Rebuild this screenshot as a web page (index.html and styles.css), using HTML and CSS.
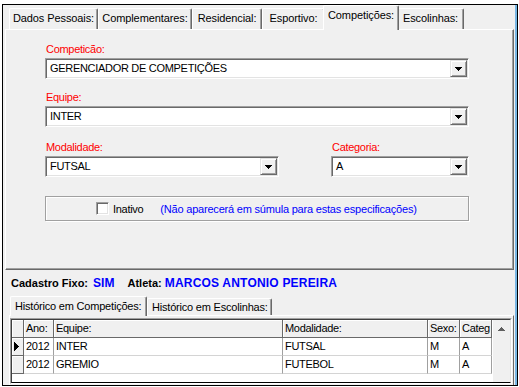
FILE: index.html
```html
<!DOCTYPE html>
<html lang="pt-BR">
<head>
  <meta charset="UTF-8" />
  <title>Competições</title>
  <link rel="stylesheet" href="styles.css">
</head>
<body>
  <div class="window">
    <div class="tabs">
      <div class="tab t-dados">Dados Pessoais:</div>
      <div class="tab t-compl">Complementares:</div>
      <div class="tab t-resid">Residencial:</div>
      <div class="tab t-esport">Esportivo:</div>
      <div class="tab t-compet active">Competições:</div>
      <div class="tab t-escol">Escolinhas:</div>
    </div>

    <div class="panel">
      <div class="field">
        <div class="lbl">Competicão:</div>
        <div class="combo">
          <span class="value">GERENCIADOR DE COMPETIÇÕES</span>
          <span class="drop"><svg width="7" height="4" viewBox="0 0 7 4"><path d="M0 0h7v1H0zM1 1h5v1H1zM2 2h3v1H2zM3 3h1v1H3z"/></svg></span>
        </div>
      </div>

      <div class="field second">
        <div class="lbl">Equipe:</div>
        <div class="combo">
          <span class="value">INTER</span>
          <span class="drop"><svg width="7" height="4" viewBox="0 0 7 4"><path d="M0 0h7v1H0zM1 1h5v1H1zM2 2h3v1H2zM3 3h1v1H3z"/></svg></span>
        </div>
      </div>

      <div class="row">
        <div class="field modal">
          <div class="lbl">Modalidade:</div>
          <div class="combo">
            <span class="value">FUTSAL</span>
            <span class="drop"><svg width="7" height="4" viewBox="0 0 7 4"><path d="M0 0h7v1H0zM1 1h5v1H1zM2 2h3v1H2zM3 3h1v1H3z"/></svg></span>
          </div>
        </div>
        <div class="field categ">
          <div class="lbl">Categoria:</div>
          <div class="combo">
            <span class="value">A</span>
            <span class="drop"><svg width="7" height="4" viewBox="0 0 7 4"><path d="M0 0h7v1H0zM1 1h5v1H1zM2 2h3v1H2zM3 3h1v1H3z"/></svg></span>
          </div>
        </div>
      </div>

      <div class="group">
        <span class="check"></span>
        <span>Inativo</span>
        <span class="note">(Não aparecerá em súmula para estas especificações)</span>
      </div>
    </div>

    <div class="status">
      Cadastro Fixo: <span class="val sim">SIM</span>
      <span class="gap">Atleta:</span><span class="val name">MARCOS ANTONIO PEREIRA</span>
    </div>

    <div class="subtabs">
      <div class="subtab s-compet active">Histórico em Competições:</div>
      <div class="subtab s-escol">Histórico em Escolinhas:</div>
    </div>

    <div class="subpanel">
      <div class="grid">
        <div class="grid-inner">
          <div class="rows">
            <div class="grow head">
              <div class="cell ind"></div>
              <div class="cell">Ano:</div>
              <div class="cell">Equipe:</div>
              <div class="cell">Modalidade:</div>
              <div class="cell">Sexo:</div>
              <div class="cell tight">Categ</div>
            </div>
            <div class="grow">
              <div class="cell ind"><svg width="5" height="9" viewBox="0 0 5 9"><path d="M0 0h1v9H0zM1 1h1v7H1zM2 2h1v5H2zM3 3h1v3H3zM4 4h1v1H4z"/></svg></div>
              <div class="cell">2012</div>
              <div class="cell">INTER</div>
              <div class="cell">FUTSAL</div>
              <div class="cell">M</div>
              <div class="cell">A</div>
            </div>
            <div class="grow">
              <div class="cell ind"></div>
              <div class="cell">2012</div>
              <div class="cell">GREMIO</div>
              <div class="cell">FUTEBOL</div>
              <div class="cell">M</div>
              <div class="cell">A</div>
            </div>
          </div>
          <div class="scroll">
            <div class="up"><svg width="7" height="4" viewBox="0 0 7 4"><path d="M3 0h1v1H3zM2 1h3v1H2zM1 2h5v1H1zM0 3h7v1H0z"/></svg></div>
          </div>
        </div>
      </div>
    </div>
  </div>
</body>
</html>
```

FILE: styles.css
```css
body {
  margin: 0;
  background: #fff;
  font-family: "Liberation Sans", Arial, sans-serif;
  font-size: 11px;
  letter-spacing: -0.3px;
  color: #000;
}
.window {
  margin: 4px 0 0 2px;
  width: 516px;
  height: 382px;
  box-sizing: border-box;
  border: 1px solid #000;
  background: #f0f0f0;
  box-shadow: inset -2px 0 #78b6e4;
}

/* top tabs */
.tabs {
  display: flex;
  align-items: flex-end;
  height: 24px;
  padding-left: 6px;
}
.tab {
  height: 21px;
  box-sizing: border-box;
  padding-top: 2px;
  line-height: 14px;
  text-align: center;
  letter-spacing: -0.1px;
  border-top: 1px solid #fff;
  border-left: 1px solid #fff;
  border-right: 1px solid #696969;
  box-shadow: inset -1px 0 #a0a0a0;
  border-radius: 2px 2px 0 0;
  white-space: nowrap;
}
.t-dados { width: 89px; }
.t-compl { width: 94px; }
.t-resid { width: 70px; }
.t-esport { width: 63px; }
.t-compet { width: 76px; }
.t-escol { width: 67px; }
.tab.active {
  height: 25px;
  margin: 0 -2px -1px;
  position: relative;
  z-index: 1;
  background: #f0f0f0;
}
.panel {
  margin: 0 3px 0 2px;
  height: 241px;
  box-sizing: border-box;
  border-top: 1px solid #fff;
  border-left: 1px solid #fff;
  border-right: 1px solid #696969;
  border-bottom: 1px solid #696969;
  box-shadow: inset -1px -1px #a0a0a0;
  padding: 12px 0 0 39px;
}

/* fields */
.field {
  width: 424px;
}
.field.second {
  margin-top: 11px;
}
.lbl {
  color: #f00;
  line-height: 14px;
  margin-bottom: 2px;
  padding-left: 1px;
}
.combo {
  display: flex;
  height: 21px;
  box-sizing: border-box;
  background: #fff;
  border: 1px solid;
  border-color: #a0a0a0 #fff #fff #a0a0a0;
  box-shadow: inset 1px 1px #696969, inset -1px -1px #e3e3e3;
  padding: 1px 1px 1px 2px;
}
.value {
  flex: 1;
  padding-left: 2px;
  line-height: 17px;
  white-space: nowrap;
}
.drop {
  width: 17px;
  height: 17px;
  box-sizing: border-box;
  background: #f0f0f0;
  border: 1px solid;
  border-color: #e3e3e3 #696969 #696969 #e3e3e3;
  box-shadow: inset 1px 1px #fff, inset -1px -1px #a0a0a0;
  display: flex;
  align-items: center;
  justify-content: center;
}
.drop svg {
  display: block;
  margin-top: 1px;
}
.row {
  display: flex;
  justify-content: space-between;
  width: 424px;
  margin-top: 13px;
}
.field.modal {
  width: 234px;
}
.field.categ {
  width: 138px;
}
.group {
  margin-top: 19px;
  width: 424px;
  height: 25px;
  box-sizing: border-box;
  border: 1px solid #a0a0a0;
  box-shadow: inset 1px 1px #fff, 1px 1px #fff;
  display: flex;
  align-items: center;
  padding-left: 50px;
}
.check {
  width: 13px;
  height: 13px;
  box-sizing: border-box;
  background: #fff;
  border: 1px solid;
  border-color: #a0a0a0 #fff #fff #a0a0a0;
  box-shadow: inset 1px 1px #696969, inset -1px -1px #e3e3e3;
  margin-right: 4px;
}
.note {
  color: #00f;
  margin-left: 17px;
  letter-spacing: -0.2px;
}

/* status line */
.status {
  margin: 6px 0 0 8px;
  height: 14px;
  line-height: 14px;
  font-weight: bold;
  letter-spacing: 0;
  white-space: nowrap;
}
.status .val {
  color: #00f;
  font-size: 12px;
}
.status .sim {
  margin-left: 2px;
}
.status .gap {
  margin-left: 10px;
}
.status .name {
  margin-left: 3px;
  letter-spacing: 0.2px;
}

/* lower tabs */
.subtabs {
  display: flex;
  align-items: flex-end;
  height: 19px;
  margin: 6px 0 0 7px;
}
.subtab {
  height: 17px;
  box-sizing: border-box;
  padding: 1px 0 0 4px;
  line-height: 14px;
  letter-spacing: -0.2px;
  border-top: 1px solid #fff;
  border-left: 1px solid #fff;
  border-right: 1px solid #696969;
  box-shadow: inset -1px 0 #a0a0a0;
  border-radius: 2px 2px 0 0;
  white-space: nowrap;
}
.s-compet { width: 137px; }
.s-escol { width: 125px; }
.subtab.active {
  height: 20px;
  margin-bottom: -1px;
  padding-top: 2px;
  position: relative;
  z-index: 1;
  background: #f0f0f0;
}
.subpanel {
  margin-left: 6px;
  width: 505px;
  height: 70px;
  box-sizing: border-box;
  border-top: 1px solid #fff;
  border-left: 1px solid #fff;
  border-right: 1px solid #696969;
  padding: 2px 1px 0 0;
}

/* data grid */
.grid {
  height: 66px;
  box-sizing: border-box;
  border: 1px solid;
  border-color: #a0a0a0 #fff #fff #a0a0a0;
}
.grid-inner {
  display: flex;
  height: 100%;
  box-sizing: border-box;
  border: 1px solid;
  border-color: #404040 #e3e3e3 #000 #404040;
  background: #fff;
}
.rows {
  width: 480px;
}
.grow {
  display: grid;
  grid-template-columns: 12px 30px 229px 145px 32px 32px;
  height: 18px;
}
.cell {
  border-right: 1px solid #a0a0a0;
  border-bottom: 1px solid #d4d4d4;
  padding: 0 2px;
  line-height: 17px;
  overflow: hidden;
  white-space: nowrap;
}
.cell.tight {
  padding: 0 0 0 2px;
}
.head .cell,
.cell.ind {
  background: #f0f0f0;
  border-right-color: #696969;
  border-bottom-color: #696969;
  box-shadow: inset 1px 1px #fff;
}
.cell.ind {
  padding: 0 0 0 2px;
  display: flex;
  align-items: center;
}
.scroll {
  flex: 1;
  background: #f0f0f0;
  border-left: 1px solid #fff;
}
.up {
  height: 17px;
  display: flex;
  align-items: center;
  justify-content: center;
  fill: #606060;
}
```
